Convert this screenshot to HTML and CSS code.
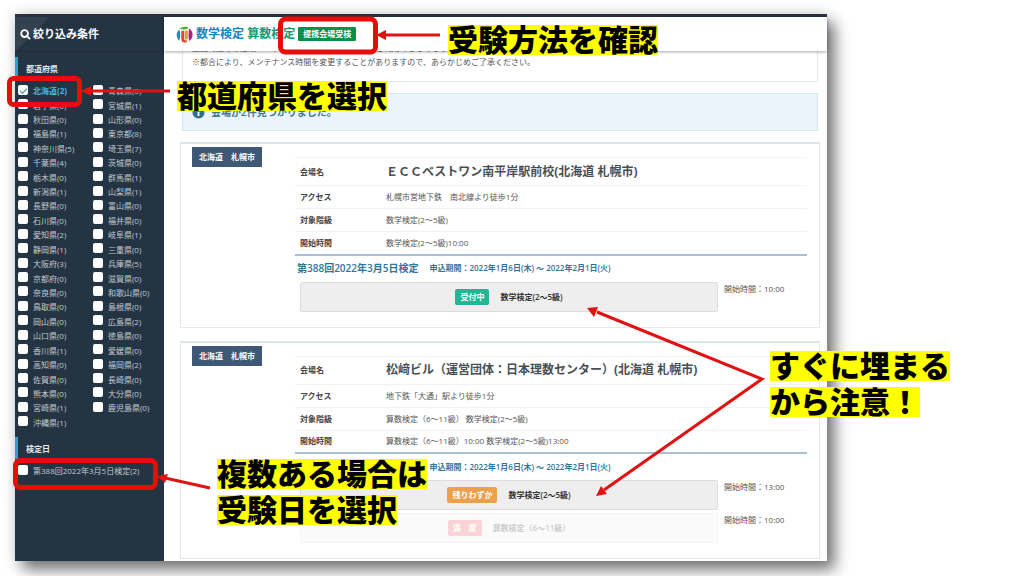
FILE: index.html
```html
<!DOCTYPE html>
<html lang="ja">
<head>
<meta charset="utf-8">
<title>数学検定 算数検定 提携会場受検</title>
<link rel="stylesheet" href="styles.css">
</head>
<body>
<div class="slide">
  <div class="window">
    <aside class="sidebar">
      <h2 class="side-title">
        <svg class="search" viewBox="0 0 12 12" aria-hidden="true"><circle cx="5" cy="5" r="3.7"/><path d="M7.8 7.8 11 11"/></svg>
        絞り込み条件
      </h2>
      <h3 class="side-heading">都道府県</h3>
      <div class="prefs">
        <label class="check on"><input type="checkbox" checked>北海道(2)</label><label class="check"><input type="checkbox">青森県(0)</label>
        <label class="check"><input type="checkbox">岩手県(0)</label><label class="check"><input type="checkbox">宮城県(1)</label>
        <label class="check"><input type="checkbox">秋田県(0)</label><label class="check"><input type="checkbox">山形県(0)</label>
        <label class="check"><input type="checkbox">福島県(1)</label><label class="check"><input type="checkbox">東京都(8)</label>
        <label class="check"><input type="checkbox">神奈川県(5)</label><label class="check"><input type="checkbox">埼玉県(7)</label>
        <label class="check"><input type="checkbox">千葉県(4)</label><label class="check"><input type="checkbox">茨城県(0)</label>
        <label class="check"><input type="checkbox">栃木県(0)</label><label class="check"><input type="checkbox">群馬県(1)</label>
        <label class="check"><input type="checkbox">新潟県(1)</label><label class="check"><input type="checkbox">山梨県(1)</label>
        <label class="check"><input type="checkbox">長野県(0)</label><label class="check"><input type="checkbox">富山県(0)</label>
        <label class="check"><input type="checkbox">石川県(0)</label><label class="check"><input type="checkbox">福井県(0)</label>
        <label class="check"><input type="checkbox">愛知県(2)</label><label class="check"><input type="checkbox">岐阜県(1)</label>
        <label class="check"><input type="checkbox">静岡県(1)</label><label class="check"><input type="checkbox">三重県(0)</label>
        <label class="check"><input type="checkbox">大阪府(3)</label><label class="check"><input type="checkbox">兵庫県(5)</label>
        <label class="check"><input type="checkbox">京都府(0)</label><label class="check"><input type="checkbox">滋賀県(0)</label>
        <label class="check"><input type="checkbox">奈良県(0)</label><label class="check"><input type="checkbox">和歌山県(0)</label>
        <label class="check"><input type="checkbox">鳥取県(0)</label><label class="check"><input type="checkbox">島根県(0)</label>
        <label class="check"><input type="checkbox">岡山県(0)</label><label class="check"><input type="checkbox">広島県(2)</label>
        <label class="check"><input type="checkbox">山口県(0)</label><label class="check"><input type="checkbox">徳島県(0)</label>
        <label class="check"><input type="checkbox">香川県(1)</label><label class="check"><input type="checkbox">愛媛県(0)</label>
        <label class="check"><input type="checkbox">高知県(0)</label><label class="check"><input type="checkbox">福岡県(2)</label>
        <label class="check"><input type="checkbox">佐賀県(0)</label><label class="check"><input type="checkbox">長崎県(0)</label>
        <label class="check"><input type="checkbox">熊本県(0)</label><label class="check"><input type="checkbox">大分県(0)</label>
        <label class="check"><input type="checkbox">宮崎県(1)</label><label class="check"><input type="checkbox">鹿児島県(0)</label>
        <label class="check"><input type="checkbox">沖縄県(1)</label>
      </div>
      <h3 class="side-heading">検定日</h3>
      <div class="dates">
        <label class="check"><input type="checkbox">第388回2022年3月5日検定(2)</label>
      </div>
    </aside>

    <div class="main">
      <header class="header">
        <svg class="logo" viewBox="0 0 18 18" aria-hidden="true">
          <path d="M3.600 3.600C-.2 6.600-.2 12.400 3.400 15.600 4.800 12 4.800 7.200 3.600 3.600z" fill="#2387c4"/>
          <path d="M3.800 3C6.400.2 11 0 13.600 2.200 10.800 4 7 4.200 3.800 3z" fill="#4fae3c"/>
          <path d="M5.600 5h3.200v8.400c0 1.500 1 1.900 2.600 1.400v2.400c-3.200 1-5.800-.2-5.800-3.400z" fill="#e0452e"/>
          <path d="M9.600 4.800h3v9c-.8.600-1.800.7-3 .4z" fill="#f19a1f"/>
          <path d="M14 2.600C18.600 5.600 18.800 12.400 14 16 13 12 13 6.600 14 2.600z" fill="#b51f78"/>
        </svg>
        <h1 class="brand"><span class="brand-blue">数学検定</span> <span class="brand-green">算数検定</span></h1>
        <span class="method">提携会場受検</span>
      </header>

      <div class="content">
        <div class="notice">
          <p>上記時間帯は定期メンテナンスのため、サービスをご利用できなくなります。</p>
          <p>※都合により、メンテナンス時間を変更することがありますので、あらかじめご了承ください。</p>
        </div>
        <div class="info">
          <svg class="info-icon" viewBox="0 0 14 14" aria-hidden="true"><circle cx="7" cy="7" r="6.500" fill="#2f6f96"/><path d="M7 3v1.800M7 6.200v4.600" stroke="#fff" stroke-width="2"/></svg>
          会場が2件見つかりました。
        </div>

        <section class="card">
          <div class="tag">北海道　札幌市</div>
          <div class="venue">
            <table class="detail">
              <tr><th>会場名</th><td class="name">ＥＣＣベストワン南平岸駅前校(北海道 札幌市)</td></tr>
              <tr><th>アクセス</th><td>札幌市営地下鉄　南北線より徒歩1分</td></tr>
              <tr><th>対象階級</th><td>数学検定(2～5級)</td></tr>
              <tr><th>開始時間</th><td>数学検定(2～5級)10:00</td></tr>
            </table>
            <div class="event"><strong>第388回2022年3月5日検定</strong><span>申込期間：2022年1月6日(木) ～ 2022年2月1日(火)</span></div>
            <div class="slots">
              <div class="slot"><button class="apply"><span class="state open">受付中</span>数学検定(2～5級)</button><span class="time">開始時間：10:00</span></div>
            </div>
          </div>
        </section>

        <section class="card">
          <div class="tag">北海道　札幌市</div>
          <div class="venue">
            <table class="detail">
              <tr><th>会場名</th><td class="name">松﨑ビル（運営団体：日本理数センター）(北海道 札幌市)</td></tr>
              <tr><th>アクセス</th><td>地下鉄「大通」駅より徒歩1分</td></tr>
              <tr><th>対象階級</th><td>算数検定（6～11級） 数学検定(2～5級)</td></tr>
              <tr><th>開始時間</th><td>算数検定（6～11級）10:00 数学検定(2～5級)13:00</td></tr>
            </table>
            <div class="event"><strong>第388回2022年3月5日検定</strong><span>申込期間：2022年1月6日(木) ～ 2022年2月1日(火)</span></div>
            <div class="slots">
              <div class="slot"><button class="apply"><span class="state few">残りわずか</span>数学検定(2～5級)</button><span class="time">開始時間：13:00</span></div>
              <div class="slot"><button class="apply" disabled><span class="state full">満　席</span>算数検定（6～11級）</button><span class="time">開始時間：10:00</span></div>
            </div>
          </div>
        </section>
      </div>
    </div>
  </div>

  <svg class="marks" viewBox="0 0 1024 576" aria-hidden="true">
    <g fill="none" stroke="#e90c0c" stroke-width="5">
      <rect x="280.500" y="19" width="95" height="33" rx="5"/>
      <rect x="9.500" y="78.500" width="70" height="26" rx="4"/>
      <rect x="15.500" y="460.500" width="140" height="27" rx="5"/>
    </g>
    <g fill="none" stroke="#e01212" stroke-width="3">
      <path d="M440 35H384M170 91H88M210 488 165 478M597 312 762 379 604 490"/>
    </g>
    <g fill="#e01212">
      <path d="M376 35l10-5v10zM81 91l10-5v10zM157 476l11-2-3 9zM587 308l11-1-4 10zM596 496l5-10 6 8z"/>
    </g>
  </svg>
  <p class="note note-method"><span>受験方法を確認</span></p>
  <p class="note note-pref"><span>都道府県を選択</span></p>
  <p class="note note-hurry"><span>すぐに埋まる</span><span>から注意！</span></p>
  <p class="note note-date"><span>複数ある場合は</span><span>受験日を選択</span></p>
</div>
</body>
</html>
```
FILE: styles.css
```css
* { box-sizing: border-box; }

body {
  margin: 0;
  background: #fff;
  color: #555;
  font: 8px/14px "Open Sans", "Noto Sans CJK JP", sans-serif;
}

h1, h2, h3, p { margin: 0; }

.slide {
  position: relative;
  min-height: 100vh;
  padding: 14px 197px 14px 15px;
  overflow: hidden;
}

.window {
  display: flex;
  border-top: 3px solid #26323f;
  background: #fff;
  box-shadow: 8px 9px 14px rgba(0, 0, 0, .5), 0 0 14px rgba(0, 0, 0, .15);
}

/* Sidebar */
.sidebar {
  flex: 0 0 149px;
  background: #243443;
  color: #c3cad0;
}

.side-title {
  display: flex;
  align-items: center;
  gap: 2px;
  height: 35px;
  padding: 0 5px;
  background: linear-gradient(135deg, #34424f 24px, #243443 25px);
  border-bottom: 1px solid #1e2b38;
  color: #fff;
  font-size: 11px;
}

.search {
  width: 11px;
  height: 11px;
  fill: none;
  stroke: #fff;
  stroke-width: 2;
}

.side-heading {
  height: 22px;
  margin-top: 5px;
  padding-left: 8px;
  border-left: 3px solid #3a9cc4;
  color: #e4e8eb;
  font-size: 8px;
  line-height: 24px;
}

.prefs {
  display: grid;
  grid-template-columns: 75px 1fr;
  min-height: 353px;
  padding: 5px 0 2px 3px;
}

.dates { padding: 5px 3px; }

.check {
  display: flex;
  align-items: center;
  gap: 5px;
  white-space: nowrap;
}

.check input {
  appearance: none;
  flex: none;
  width: 10px;
  height: 10px;
  margin: 0 0 3px;
  border-radius: 2px;
  background: #fff;
}

.check input:checked::after {
  content: "";
  display: block;
  width: 6px;
  height: 3px;
  margin: 3px 2px;
  border: solid #2c93bd;
  border-width: 0 0 1px 1px;
  transform: rotate(-45deg);
}

.on {
  color: #45b7e0;
  font-weight: 700;
}

/* Main column */
.main {
  flex: 1;
  min-width: 0;
  display: flex;
  flex-direction: column;
}

.header {
  position: relative;
  display: flex;
  align-items: center;
  gap: 3px;
  height: 34px;
  padding-left: 12px;
  background: #fff;
  box-shadow: 0 1px 3px rgba(0, 0, 0, .35);
}

.logo {
  width: 17px;
  height: 17px;
}

.brand {
  font-size: 12px;
  font-weight: 700;
}

.brand-blue { color: #1386c5; }
.brand-green { color: #129b72; }

.method {
  padding: 0 5px;
  border-radius: 1px;
  background: #0b9147;
  color: #fff;
  font-weight: 700;
}

.content {
  flex: 1;
  padding: 0 7px 2px 16px;
  overflow: hidden;
}

.notice {
  margin: -11px 2px 0;
  padding: 0 9px 12px;
  border: 1px solid #e6eaec;
}

.info {
  display: flex;
  align-items: center;
  gap: 6px;
  height: 38px;
  margin: 11px 2px;
  padding: 0 9px;
  border: 1px solid #d2e8ec;
  background: #ebf4fa;
  color: #3a7696;
  font-size: 10px;
  font-weight: 600;
}

.info-icon {
  width: 13px;
  height: 13px;
}

.card {
  display: flex;
  justify-content: space-between;
  align-items: flex-start;
  padding: 3px 12px 15px 11px;
  border: 1px solid #e3e9ec;
  border-top: 2px solid #dce7ea;
}

.card + .card { margin-top: 13px; }

.tag {
  width: 70px;
  background: #3e5875;
  color: #fff;
  font-weight: 700;
  line-height: 20px;
  text-align: center;
}

.venue {
  width: 512px;
  padding-top: 10px;
}

.detail {
  width: 100%;
  border-collapse: collapse;
  border-bottom: 2px solid #a9bfd3;
}

.detail th,
.detail td {
  height: 23px;
  padding: 0 5px;
  border-top: 1px solid #f0f2f4;
  text-align: left;
}

.detail th {
  width: 86px;
  color: #444;
  font-weight: 600;
}

.detail .name {
  height: 28px;
  color: #4a4f54;
  font-size: 12px;
  font-weight: 700;
}

.event {
  display: flex;
  align-items: center;
  gap: 11px;
  height: 25px;
  padding-left: 2px;
  color: #2f7599;
  font-weight: 600;
}

.event strong {
  font-size: 10px;
  font-weight: 600;
}

.slots {
  display: grid;
  gap: 3px;
  padding: 1px 0 0 5px;
}

.slot {
  display: flex;
  gap: 6px;
}

.apply {
  flex: 1;
  display: flex;
  justify-content: center;
  align-items: center;
  gap: 11px;
  height: 30px;
  padding: 0;
  border: 1px solid #ddd;
  border-radius: 2px;
  background: #eee;
  color: #333;
  font: inherit;
  font-weight: 600;
}

.apply:disabled { opacity: .25; }

.state {
  padding: 0 5px;
  border-radius: 2px;
  color: #fff;
  font-weight: 700;
  line-height: 16px;
}

.open { background: #23b695; }
.few { background: #eba04e; }
.full { background: #ed5565; }

.time { width: 83px; }

/* Annotations laid over the window */
.marks {
  position: absolute;
  top: 0;
  left: 0;
  width: 1024px;
  height: 576px;
}

.note {
  position: absolute;
  display: flex;
  flex-direction: column;
  align-items: flex-start;
  gap: 6px;
  color: #000;
  font-family: "Noto Sans CJK JP", sans-serif;
  font-size: 30px;
  font-weight: 900;
  line-height: 26px;
  white-space: nowrap;
}

.note span {
  padding-bottom: 4px;
  background: #ff0;
}

.note-method { top: 25px; left: 448px; }
.note-pref { top: 81px; left: 177px; }
.note-hurry { top: 351px; left: 770px; }
.note-date { top: 459px; left: 217px; }
```
